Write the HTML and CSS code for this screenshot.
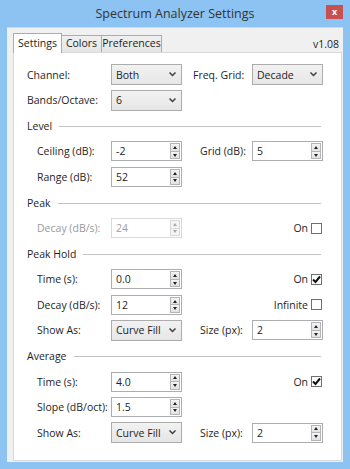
FILE: index.html
```html
<!DOCTYPE html>
<html>
<head>
  <meta charset="UTF-8">
  <title>Spectrum Analyzer Settings</title>
  <link rel="stylesheet" href="styles.css">
</head>
<body>
  <div class="window">
    <div class="titlebar">
      <span></span>
      <div class="title">Spectrum Analyzer Settings</div>
      <div class="close">x</div>
    </div>
    <div class="client">
      <div class="tabs">
        <div class="tab active">Settings</div>
        <div class="tab t-colors">Colors</div>
        <div class="tab t-prefs">Preferences</div>
        <div class="version">v1.08</div>
      </div>
      <div class="page">

        <div class="row">
          <span class="lbl">Channel:</span>
          <div class="combo">Both<svg width="7" height="5"><polyline points="0.5,0.5 3.5,3.5 6.5,0.5"/></svg></div>
          <span class="lbl rl0">Freq. Grid:</span>
          <div class="combo rc">Decade<svg width="7" height="5"><polyline points="0.5,0.5 3.5,3.5 6.5,0.5"/></svg></div>
        </div>
        <div class="row">
          <span class="lbl">Bands/Octave:</span>
          <div class="combo">6<svg width="7" height="5"><polyline points="0.5,0.5 3.5,3.5 6.5,0.5"/></svg></div>
        </div>

        <div class="section"><span>Level</span><i></i></div>
        <div class="row">
          <span class="lbl ind">Ceiling (dB):</span>
          <div class="spin"><span class="val">-2</span><span class="arrows"><b class="up"></b><b class="dn"></b></span></div>
          <span class="lbl rl">Grid (dB):</span>
          <div class="spin rc"><span class="val">5</span><span class="arrows"><b class="up"></b><b class="dn"></b></span></div>
        </div>
        <div class="row">
          <span class="lbl ind">Range (dB):</span>
          <div class="spin"><span class="val">52</span><span class="arrows"><b class="up"></b><b class="dn"></b></span></div>
        </div>

        <div class="section"><span>Peak</span><i></i></div>
        <div class="row">
          <span class="lbl ind off">Decay (dB/s):</span>
          <div class="spin off"><span class="val">24</span><span class="arrows"><b class="up"></b><b class="dn"></b></span></div>
          <label class="check">On<span class="box"></span></label>
        </div>

        <div class="section"><span>Peak Hold</span><i></i></div>
        <div class="row">
          <span class="lbl ind">Time (s):</span>
          <div class="spin"><span class="val">0.0</span><span class="arrows"><b class="up"></b><b class="dn"></b></span></div>
          <label class="check">On<span class="box"><svg width="9" height="9"><path d="M1 4.5 L3.5 7 L8 1.5"/></svg></span></label>
        </div>
        <div class="row">
          <span class="lbl ind">Decay (dB/s):</span>
          <div class="spin"><span class="val">12</span><span class="arrows"><b class="up"></b><b class="dn"></b></span></div>
          <label class="check">Infinite<span class="box"></span></label>
        </div>
        <div class="row">
          <span class="lbl ind">Show As:</span>
          <div class="combo">Curve Fill<svg width="7" height="5"><polyline points="0.5,0.5 3.5,3.5 6.5,0.5"/></svg></div>
          <span class="lbl rl">Size (px):</span>
          <div class="spin rc"><span class="val">2</span><span class="arrows"><b class="up"></b><b class="dn"></b></span></div>
        </div>

        <div class="section"><span>Average</span><i></i></div>
        <div class="row">
          <span class="lbl ind">Time (s):</span>
          <div class="spin"><span class="val">4.0</span><span class="arrows"><b class="up"></b><b class="dn"></b></span></div>
          <label class="check">On<span class="box"><svg width="9" height="9"><path d="M1 4.5 L3.5 7 L8 1.5"/></svg></span></label>
        </div>
        <div class="row">
          <span class="lbl ind">Slope (dB/oct):</span>
          <div class="spin"><span class="val">1.5</span><span class="arrows"><b class="up"></b><b class="dn"></b></span></div>
        </div>
        <div class="row">
          <span class="lbl ind">Show As:</span>
          <div class="combo">Curve Fill<svg width="7" height="5"><polyline points="0.5,0.5 3.5,3.5 6.5,0.5"/></svg></div>
          <span class="lbl rl">Size (px):</span>
          <div class="spin rc"><span class="val">2</span><span class="arrows"><b class="up"></b><b class="dn"></b></span></div>
        </div>

      </div>
    </div>
  </div>
</body>
</html>
```

FILE: styles.css
```css
* {box-sizing:border-box;}
body {margin:0;font-family:"Open Sans","Noto Sans",sans-serif;font-size:10.5px;color:#1e1e1e;}
.window {width:350px;height:469px;background:#8dc3f2;display:flex;flex-direction:column;}

.titlebar {height:27px;display:grid;grid-template-columns:1fr auto 1fr;align-items:start;}
.title {font-size:12.5px;color:#333;line-height:28px;}
.close {justify-self:end;margin:5px 7px 0 0;width:17px;height:14px;background:#c75050;color:#fff;
  font-size:9px;font-weight:bold;line-height:13px;text-align:center;}

.client {flex:1;margin:0 7px 7px;background:#f0f0f0;border-top:1px solid #c9dced;padding:5px 1px 1px 6px;
  display:flex;flex-direction:column;}

.tabs {height:19px;display:flex;align-items:flex-end;}
.tab {height:17px;border:1px solid #acacac;border-bottom:none;background:linear-gradient(#f0f0f0,#e5e5e5);
  line-height:15px;text-align:center;margin-left:-1px;}
.tab.active {height:20px;width:49px;margin:0 0 -1px 0;background:#fff;position:relative;z-index:1;line-height:18px;}
.t-colors {width:41px;}
.t-prefs {width:61px;}
.version {margin-left:auto;margin-right:3px;align-self:center;padding-top:2px;}

.page {flex:1;background:#fff;border:1px solid #d9d9d9;padding:9px 0 0 13px;}

.row {display:grid;grid-template-columns:84px 71px 11px 59px 71px;height:25.57px;align-items:center;}
.lbl {grid-column:1;white-space:nowrap;}
.lbl.ind {padding-left:10px;}
.lbl.off {color:#9a9a9a;}
.rl0 {grid-column:4;}
.rl {grid-column:4;padding-left:7px;}
.rc {grid-column:5;}

.section {height:25.57px;display:flex;align-items:center;gap:7px;margin-right:20px;}
.section i {flex:1;border-top:1px solid #c3c3c3;margin-top:1px;}

.combo {height:21px;border:1px solid #acacac;background:linear-gradient(#f2f2f2,#e6e6e6);
  display:flex;align-items:center;justify-content:space-between;padding:0 5px 0 4px;}
.combo svg polyline {fill:none;stroke:#404040;stroke-width:1.5;}

.spin {height:20px;border:1px solid #abadb3;background:#fff;display:flex;}
.spin .val {flex:1;padding-left:4px;line-height:18px;}
.spin .arrows {width:10px;margin:1px 1px 1px 0;display:flex;flex-direction:column;}
.arrows b {flex:1;border:1px solid #b5b5b5;background:linear-gradient(#f4f4f4,#e2e2e2);
  display:flex;align-items:center;justify-content:center;}
.arrows b + b {margin-top:-1px;}
.arrows b::after {content:"";border-left:2.5px solid transparent;border-right:2.5px solid transparent;}
.arrows .up::after {border-bottom:3px solid #222;}
.arrows .dn::after {border-top:3px solid #222;}
.spin.off {border-color:#d9d9d9;color:#a0a0a0;}
.spin.off .arrows b {border-color:#d9d9d9;background:#f4f4f4;}
.spin.off .arrows .up::after {border-bottom-color:#a8a8a8;}
.spin.off .arrows .dn::after {border-top-color:#a8a8a8;}

.check {grid-column:4 / 6;justify-self:end;margin-right:1px;display:flex;align-items:center;gap:3px;}
.box {width:11px;height:11px;border:1px solid #707070;background:#fff;display:flex;align-items:center;justify-content:center;}
.box svg path {fill:none;stroke:#111;stroke-width:2;}
```
